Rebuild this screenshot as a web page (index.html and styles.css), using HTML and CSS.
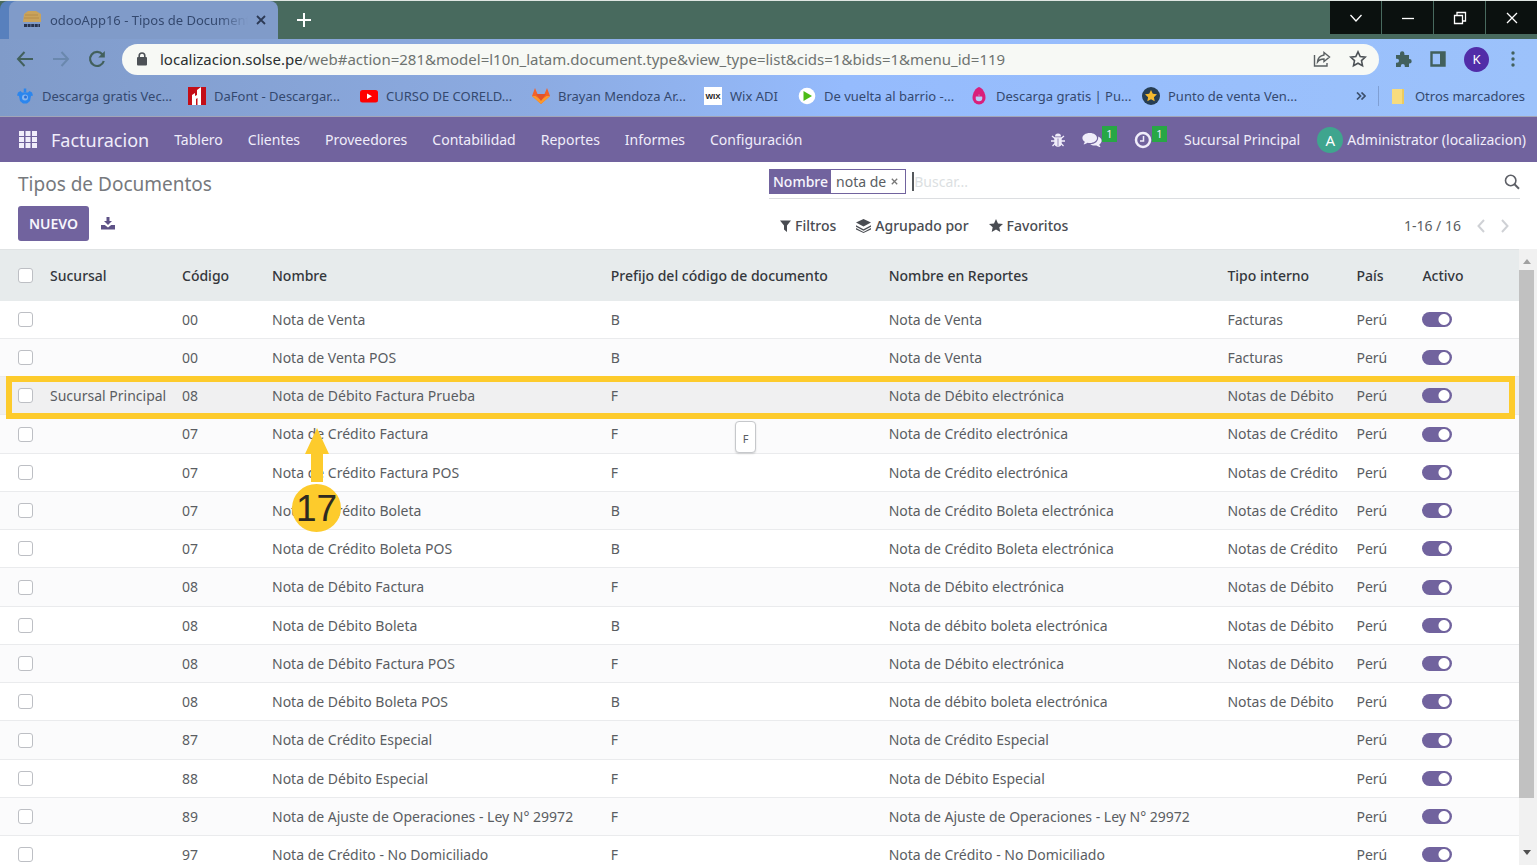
FILE: index.html
```
<!DOCTYPE html>
<html lang="es">
<head>
<meta charset="utf-8">
<title>odooApp16 - Tipos de Documentos</title>
<link rel="stylesheet" href="styles.css">
</head>
<body>
<header class="browser">
  <div class="tabstrip">
    <div class="tab">
      <svg class="favicon" viewBox="0 0 20 20"><path d="M2 4 6 1h8l5 3v8H1z" fill="#c9a35c"/><path d="M3 5h13M2 8h15" stroke="#b58c4a"/><path d="M2 15.500h16" stroke="#27334f" stroke-width="3" stroke-dasharray="3 .6"/></svg>
      <span class="tab-title">odooApp16 - Tipos de Documentos</span>
      <button class="bare" aria-label="Cerrar pestaña"><svg width="10" height="10" viewBox="0 0 10 10"><path d="m1 1 8 8M9 1 1 9" stroke="#2c3a55" stroke-width="1.800"/></svg></button>
    </div>
    <button class="bare new-tab" aria-label="Nueva pestaña"><svg width="14" height="14" viewBox="0 0 14 14"><path d="M7 0v14M0 7h14" stroke="#fff" stroke-width="2"/></svg></button>
    <div class="window-buttons">
      <button aria-label="Buscar pestañas"><svg width="14" height="14" viewBox="0 0 14 14"><path d="m1.500 4 5.500 6 5.500-6"/></svg></button>
      <button aria-label="Minimizar"><svg width="14" height="14" viewBox="0 0 14 14"><path d="M1 7.500h12"/></svg></button>
      <button aria-label="Restaurar"><svg width="14" height="14" viewBox="0 0 14 14"><path d="M1.500 4.500h8v8h-8zM4 4V1.500h8.500V10H10"/></svg></button>
      <button aria-label="Cerrar"><svg width="14" height="14" viewBox="0 0 14 14"><path d="m2 2 10 10M12 2 2 12"/></svg></button>
    </div>
  </div>
  <div class="toolbar">
    <button class="bare" aria-label="Atrás"><svg width="18" height="16" viewBox="0 0 18 16"><path d="M17 8H2M8.500 1 2 8l6.500 7" fill="none" stroke="#42605c" stroke-width="2"/></svg></button>
    <button class="bare" aria-label="Adelante"><svg width="18" height="16" viewBox="0 0 18 16"><path d="M1 8h15M9.500 1 16 8l-6.500 7" fill="none" stroke="#6a88ae" stroke-width="2"/></svg></button>
    <button class="bare" aria-label="Recargar"><svg width="18" height="18" viewBox="0 0 18 18"><path d="M14.500 4.500A7 7 0 1 0 15.800 11" fill="none" stroke="#42605c" stroke-width="2.200"/><path d="M16.800 1v6.500h-6.500z" fill="#42605c"/></svg></button>
    <div class="omnibox">
      <svg width="10" height="14" viewBox="0 0 10 14"><path d="M2.200 6V3.800a2.800 2.800 0 0 1 5.600 0V6" fill="none" stroke="#4d5256" stroke-width="1.600"/><rect y="5" width="10" height="8.500" rx="1" fill="#4d5256"/></svg>
      <div class="url"><span class="host">localizacion.solse.pe</span>/web#action=281&amp;model=l10n_latam.document.type&amp;view_type=list&amp;cids=1&amp;bids=1&amp;menu_id=119</div>
      <button class="bare" aria-label="Compartir"><svg width="18" height="18" viewBox="0 0 18 18" fill="none" stroke="#5a6062" stroke-width="1.400"><path d="M1.500 5v11h12.500v-3"/><path d="M11 2.500 16.500 7 11 11.500V9c-3 0-5 .8-6.500 3 .3-3.800 2.500-6.300 6.500-7z"/></svg></button>
      <button class="bare" aria-label="Añadir a marcadores"><svg width="18" height="18" viewBox="0 0 18 18"><path d="m9 1.800 2.200 4.700 5.100.6-3.800 3.500 1 5.100L9 13.200l-4.500 2.500 1-5.100L1.700 7.100l5.100-.6z" fill="none" stroke="#4d5256" stroke-width="1.600"/></svg></button>
    </div>
    <button class="bare" aria-label="Extensiones"><svg width="18" height="18" viewBox="0 0 18 18"><path d="M2 5h4V3.500a2.200 2.200 0 0 1 4.400 0V5H15v4h.5a2.200 2.200 0 0 1 0 4.400H15V17h-4.200v-1a2 2 0 0 0-4 0v1H2v-4.300h1a2 2 0 0 0 0-4H2z" fill="#42605c"/></svg></button>
    <button class="bare" aria-label="Panel lateral"><svg width="16" height="16" viewBox="0 0 16 16"><path d="M1.500 1.500h13v13h-13z" fill="none" stroke="#42605c" stroke-width="2.400"/><path d="M10 1h5v14h-5z" fill="#42605c"/></svg></button>
    <button class="profile">K</button>
    <button class="bare kebab" aria-label="Menú"><svg width="4" height="16" viewBox="0 0 4 16" fill="#42605c"><circle cx="2" cy="2" r="1.700"/><circle cx="2" cy="8" r="1.700"/><circle cx="2" cy="14" r="1.700"/></svg></button>
  </div>
  <nav class="bookmarks">
    <a href="#"><svg viewBox="0 0 18 18"><path d="M2 5.500 4.500 4l1.500 1.500h6L13.500 4 16 5.500l1 3-2 .5-1 5-3 2.500H7L4 14 3 9l-2-.5z" fill="#2b86ee"/><path d="M9 1.500v4" stroke="#2b86ee" stroke-width="2.500"/><circle cx="9" cy="10.500" r="3" fill="#86b4ee"/><circle cx="9.500" cy="10" r="1.500" fill="#2b6fd6"/></svg>Descarga gratis Vec...</a>
    <a href="#"><svg viewBox="0 0 18 18"><path d="M0 0h18v18H0z" fill="#c40d17"/><path d="M4 18V8l3-2v3l2-1V3l4-3v18H9.500v-7L8 12v6z" fill="#fff"/></svg>DaFont - Descargar...</a>
    <a href="#"><svg viewBox="0 0 18 18"><rect y="3" width="18" height="12.500" rx="2.500" fill="#f00"/><path d="M7 6.500v5.500l5-2.750z" fill="#fff"/></svg>CURSO DE CORELD...</a>
    <a href="#"><svg viewBox="0 0 18 18"><path d="M3 1 0 9l9 8 9-8-3-8-2.500 6h-7z" fill="#f2622a"/><path d="m0 9 9 8 9-8-3.500 0L9 13 3.500 9z" fill="#fb9a2c"/><path d="M4 7h10l-5 7z" fill="#e2532a"/></svg>Brayan Mendoza Ar...</a>
    <a href="#" class="short"><svg viewBox="0 0 18 18"><path d="M0 0h18v18H0z" fill="#fff"/><text x="9" y="12" text-anchor="middle" class="wix">WIX</text></svg>Wix ADI</a>
    <a href="#"><svg viewBox="0 0 18 18"><circle cx="9" cy="9" r="8.300" fill="#fff"/><path d="M5.500 4v10L14 9z" fill="#4cbb17"/></svg>De vuelta al barrio -...</a>
    <a href="#"><svg viewBox="0 0 18 18"><path d="M9 0c3 1 6.500 5 6.500 11a6.500 6.500 0 0 1-13 0C2.500 5 6 1 9 0z" fill="#d91f7b"/><circle cx="9" cy="11" r="3.300" fill="#b9cdf8"/><path d="m6 7 3 1.500L12 7v2.500H6z" fill="#d91f7b"/></svg>Descarga gratis | Pu...</a>
    <a href="#"><svg viewBox="0 0 18 18"><circle cx="9" cy="9" r="9" fill="#263d52"/><path d="m9 3 1.800 3.800 4.200.5-3.100 2.900.8 4.100L9 12.300l-3.700 2 .8-4.100L3 7.300l4.200-.5z" fill="#f4b92e"/></svg>Punto de venta Ven...</a>
    <button class="bare more" aria-label="Más marcadores"><svg width="10" height="8" viewBox="0 0 10 8"><path d="m1 .5 3.500 3.500L1 7.500M5.500.5 9 4 5.500 7.500" fill="none" stroke="#3b4f6c" stroke-width="1.700"/></svg></button>
    <a href="#" class="others"><svg viewBox="0 0 18 18"><path d="M3 2h12v15H3z" fill="#f7dc7e"/><path d="M13 2h2v15h-2z" fill="#eccb60"/></svg>Otros marcadores</a>
  </nav>
</header>

<nav class="navbar">
  <button class="bare" aria-label="Aplicaciones"><svg width="18" height="17" viewBox="0 0 18 17" fill="#f0edfa"><path d="M0 0h5v5H0zM6.500 0h5v5h-5zM13 0h5v5h-5zM0 6h5v5H0zM6.500 6h5v5h-5zM13 6h5v5h-5zM0 12h5v5H0zM6.500 12h5v5h-5zM13 12h5v5h-5z"/></svg></button>
  <a href="#" class="brand">Facturacion</a>
  <div class="menu">
    <a href="#">Tablero</a><a href="#">Clientes</a><a href="#">Proveedores</a><a href="#">Contabilidad</a><a href="#">Reportes</a><a href="#">Informes</a><a href="#">Configuración</a>
  </div>
  <div class="systray">
    <button class="bare" aria-label="Depuración"><svg width="14" height="14" viewBox="0 0 14 14"><path d="M4 3.500a3 3 0 0 1 6 0z" fill="#f0edfa"/><path d="M3.300 4.300h7.400V10a3.700 3.700 0 0 1-7.400 0z" fill="#f0edfa"/><path d="m1 3 3 2.500M13 3l-3 2.500M0 8h14M1.500 13 4 10.500M12.500 13 10 10.500" stroke="#f0edfa" stroke-width="1.300"/><path d="M7 5.500V13" stroke="#71639e" stroke-width=".7"/></svg></button>
    <button class="bare counter" aria-label="Conversaciones"><svg width="20" height="18" viewBox="0 -1 20 18" fill="#f0edfa"><path d="M7.800 1C12 1 15 3.200 15 6s-3 5-7.200 5c-.8 0-1.500 0-2.200-.2C4.500 11.600 3 12.300 1.500 12.300c.7-.7 1.200-1.500 1.300-2.500C1.200 8.900.4 7.500.4 6c0-2.800 3.200-5 7.400-5z"/><path d="M16.200 4.500c2 .9 3.400 2.300 3.400 4.200 0 1.500-.9 2.800-2.300 3.700.2 1 .6 1.800 1.300 2.500-1.600 0-3-.6-4.200-1.500-2.400.4-4.600 0-6.200-1.200 4.800 0 8.500-2.800 8-7.700z"/></svg><span class="badge">1</span></button>
    <button class="bare counter" aria-label="Actividades"><svg width="18" height="18" viewBox="0 0 18 18"><circle cx="9" cy="9" r="7" fill="none" stroke="#f0edfa" stroke-width="2.500"/><path d="M9.500 5v5H6" fill="none" stroke="#f0edfa" stroke-width="1.500"/></svg><span class="badge">1</span></button>
    <a href="#">Sucursal Principal</a>
    <a href="#" class="user"><span class="avatar">A</span>Administrator (localizacion)</a>
  </div>
</nav>

<section class="control-panel">
  <div class="cp-left">
    <h1>Tipos de Documentos</h1>
    <div class="actions">
      <button class="primary">NUEVO</button>
      <button class="bare" aria-label="Exportar"><svg width="14" height="13" viewBox="0 0 14 13" fill="#5e5287"><path d="M5.500 0h3v4H11L7 8 3 4h2.500z"/><path d="M0 8h3.800L7 10.500 10.200 8H14v4.500H0z"/></svg></button>
    </div>
  </div>
  <div class="cp-right">
    <div class="search">
      <div class="facet"><span class="facet-name">Nombre</span><span class="facet-value">nota de <button class="bare" aria-label="Quitar"><svg width="7" height="7" viewBox="0 0 7 7"><path d="m.8.800 5.400 5.400M6.200.8.800 6.200" stroke="#777" stroke-width="1.300"/></svg></button></span></div>
      <i class="caret"></i>
      <input type="text" placeholder="Buscar..." aria-label="Buscar">
      <button class="bare" aria-label="Buscar"><svg width="16" height="16" viewBox="0 0 16 16" fill="none" stroke="#5d5f66"><circle cx="6.700" cy="6.500" r="5.200" stroke-width="1.600"/><path d="m10.500 10.300 4.500 4.500" stroke-width="2"/></svg></button>
    </div>
    <div class="filters">
      <button><svg width="11" height="12" viewBox="0 0 11 12"><path d="M0 .5h11L7 5.500V12L4 9.500v-4z"/></svg>Filtros</button>
      <button><svg width="15" height="14" viewBox="0 0 15 14"><path d="m7.500 0 7.500 3.500L7.500 7.500 0 3.500z"/><path d="m0 6.300 7.500 4 7.500-4v1.500l-7.500 4-7.500-4z"/><path d="m0 9 7.500 4L15 9v1.400L7.500 14 0 10.400z"/></svg>Agrupado por</button>
      <button><svg width="14" height="13" viewBox="0 0 14 13"><path d="m7 0 2 4.400 5 .5-3.700 3.300 1 4.800L7 10.600 2.700 13l1-4.800L0 4.900l5-.5z"/></svg>Favoritos</button>
      <div class="pager"><span>1-16 / 16</span>
        <button class="bare" aria-label="Anterior"><svg width="8" height="14" viewBox="0 0 8 14"><path d="M7 1 1.500 7 7 13"/></svg></button>
        <button class="bare" aria-label="Siguiente"><svg width="8" height="14" viewBox="0 0 8 14"><path d="m1 1 5.500 6L1 13"/></svg></button></div>
    </div>
  </div>
</section>

<main class="list">
  <div class="table-wrap">
  <table>
    <colgroup><col class="c-check"><col class="c-branch"><col class="c-code"><col class="c-name"><col class="c-prefix"><col class="c-report"><col class="c-type"><col class="c-country"><col></colgroup>
    <thead><tr><th><input type="checkbox" aria-label="Seleccionar todo"></th><th>Sucursal</th><th>Código</th><th>Nombre</th><th>Prefijo del código de documento</th><th>Nombre en Reportes</th><th>Tipo interno</th><th>País</th><th>Activo</th></tr></thead>
    <tbody>
      <tr><td><input type="checkbox" aria-label="Fila"></td><td></td><td>00</td><td>Nota de Venta</td><td>B</td><td>Nota de Venta</td><td>Facturas</td><td>Perú</td><td><input type="checkbox" class="switch" aria-label="Activo" checked></td></tr>
      <tr><td><input type="checkbox" aria-label="Fila"></td><td></td><td>00</td><td>Nota de Venta POS</td><td>B</td><td>Nota de Venta</td><td>Facturas</td><td>Perú</td><td><input type="checkbox" class="switch" aria-label="Activo" checked></td></tr>
      <tr class="current"><td><input type="checkbox" aria-label="Fila"><span class="highlight"></span><span class="step"><svg width="24" height="54" viewBox="0 0 24 54" fill="#fdcb2c"><path d="M12 0 24 26h-6v28H6V26H0z"/></svg><b>17</b></span></td><td>Sucursal Principal</td><td>08</td><td>Nota de Débito Factura Prueba</td><td>F<span class="tooltip" role="tooltip">F</span></td><td>Nota de Débito electrónica</td><td>Notas de Débito</td><td>Perú</td><td><input type="checkbox" class="switch" aria-label="Activo" checked></td></tr>
      <tr><td><input type="checkbox" aria-label="Fila"></td><td></td><td>07</td><td>Nota de Crédito Factura</td><td>F</td><td>Nota de Crédito electrónica</td><td>Notas de Crédito</td><td>Perú</td><td><input type="checkbox" class="switch" aria-label="Activo" checked></td></tr>
      <tr><td><input type="checkbox" aria-label="Fila"></td><td></td><td>07</td><td>Nota de Crédito Factura POS</td><td>F</td><td>Nota de Crédito electrónica</td><td>Notas de Crédito</td><td>Perú</td><td><input type="checkbox" class="switch" aria-label="Activo" checked></td></tr>
      <tr><td><input type="checkbox" aria-label="Fila"></td><td></td><td>07</td><td>Nota de Crédito Boleta</td><td>B</td><td>Nota de Crédito Boleta electrónica</td><td>Notas de Crédito</td><td>Perú</td><td><input type="checkbox" class="switch" aria-label="Activo" checked></td></tr>
      <tr><td><input type="checkbox" aria-label="Fila"></td><td></td><td>07</td><td>Nota de Crédito Boleta POS</td><td>B</td><td>Nota de Crédito Boleta electrónica</td><td>Notas de Crédito</td><td>Perú</td><td><input type="checkbox" class="switch" aria-label="Activo" checked></td></tr>
      <tr><td><input type="checkbox" aria-label="Fila"></td><td></td><td>08</td><td>Nota de Débito Factura</td><td>F</td><td>Nota de Débito electrónica</td><td>Notas de Débito</td><td>Perú</td><td><input type="checkbox" class="switch" aria-label="Activo" checked></td></tr>
      <tr><td><input type="checkbox" aria-label="Fila"></td><td></td><td>08</td><td>Nota de Débito Boleta</td><td>B</td><td>Nota de débito boleta electrónica</td><td>Notas de Débito</td><td>Perú</td><td><input type="checkbox" class="switch" aria-label="Activo" checked></td></tr>
      <tr><td><input type="checkbox" aria-label="Fila"></td><td></td><td>08</td><td>Nota de Débito Factura POS</td><td>F</td><td>Nota de Débito electrónica</td><td>Notas de Débito</td><td>Perú</td><td><input type="checkbox" class="switch" aria-label="Activo" checked></td></tr>
      <tr><td><input type="checkbox" aria-label="Fila"></td><td></td><td>08</td><td>Nota de Débito Boleta POS</td><td>B</td><td>Nota de débito boleta electrónica</td><td>Notas de Débito</td><td>Perú</td><td><input type="checkbox" class="switch" aria-label="Activo" checked></td></tr>
      <tr><td><input type="checkbox" aria-label="Fila"></td><td></td><td>87</td><td>Nota de Crédito Especial</td><td>F</td><td>Nota de Crédito Especial</td><td></td><td>Perú</td><td><input type="checkbox" class="switch" aria-label="Activo" checked></td></tr>
      <tr><td><input type="checkbox" aria-label="Fila"></td><td></td><td>88</td><td>Nota de Débito Especial</td><td>F</td><td>Nota de Débito Especial</td><td></td><td>Perú</td><td><input type="checkbox" class="switch" aria-label="Activo" checked></td></tr>
      <tr><td><input type="checkbox" aria-label="Fila"></td><td></td><td>89</td><td>Nota de Ajuste de Operaciones - Ley N° 29972</td><td>F</td><td>Nota de Ajuste de Operaciones - Ley N° 29972</td><td></td><td>Perú</td><td><input type="checkbox" class="switch" aria-label="Activo" checked></td></tr>
      <tr><td><input type="checkbox" aria-label="Fila"></td><td></td><td>97</td><td>Nota de Crédito - No Domiciliado</td><td>F</td><td>Nota de Crédito - No Domiciliado</td><td></td><td>Perú</td><td><input type="checkbox" class="switch" aria-label="Activo" checked></td></tr>
    </tbody>
  </table>
  </div>
  <div class="scrollbar">
    <svg width="8" height="5" viewBox="0 0 8 5"><path d="M0 5h8L4 0z" fill="#a0a0a0"/></svg>
    <div class="track"><div class="thumb"></div></div>
    <svg width="8" height="5" viewBox="0 0 8 5"><path d="M0 0h8L4 5z" fill="#505050"/></svg>
  </div>
</main>
</body>
</html>
```
FILE: styles.css
```
* { box-sizing: border-box; }
html, body { height: 100%; }
body {
  margin: 0;
  display: flex;
  flex-direction: column;
  overflow: hidden;
  background: #fff;
  color: #5a5d62;
  font: 14px/20px "Noto Sans", "Open Sans", sans-serif;
}
a { color: inherit; text-decoration: none; white-space: nowrap; }
button { font: inherit; color: inherit; cursor: pointer; }
svg { display: block; flex: none; }
.bare { border: 0; padding: 0; background: none; flex: none; }

/* Browser window */
.browser { flex: none; background: linear-gradient(90deg, #809bc9, #8cabe2 35%, #95bbfd 55%, #9cc2fb); border-bottom: 1px solid #a2a5b8; }
.tabstrip { display: flex; height: 39px; align-items: center; background: #486a5e; border-top: 1px solid #dfe6e2; }
.tab {
  display: flex; align-items: center; gap: 8px;
  align-self: stretch;
  width: 269px; margin-left: 9px; padding: 0 12px 0 13px;
  border-radius: 8px 8px 0 0;
  background: #809bc9;
  box-shadow: -9px 0 #5880bd;
}
.favicon { width: 20px; height: 20px; }
.tab-title {
  flex: 1; overflow: hidden; white-space: nowrap; color: #34496f; font-size: 13px;
  mask-image: linear-gradient(90deg, #000 85%, transparent);
}
.new-tab { margin-left: 19px; }
.window-buttons { display: flex; align-self: flex-start; gap: 1px; margin-left: auto; background: #486a5e; }
.window-buttons button { display: grid; place-items: center; width: 51px; height: 33px; padding: 0; border: 0; background: #0b110f; }
.window-buttons path { fill: none; stroke: #fff; stroke-width: 1.3; }
.toolbar { display: flex; align-items: center; gap: 18px; height: 40px; padding: 0 22px 0 16px; }
.omnibox {
  flex: 1; display: flex; align-items: center; gap: 18px; min-width: 0;
  height: 31px; margin: 0 -3px 0 -2px; padding: 0 12px 0 15px;
  border-radius: 16px; background: #f7f9f5;
}
.url { flex: 1; overflow: hidden; white-space: nowrap; color: #6e7370; font-size: 15px; margin-left: -5px; }
.host { color: #2a2f30; }
.profile { width: 25px; height: 25px; padding: 0; border: 0; border-radius: 50%; background: #512da8; color: #fff; font-size: 13px; line-height: 25px; }
.kebab { padding-left: 4px; }
.bookmarks { display: flex; align-items: center; height: 37px; padding: 0 12px 4px 16px; color: #34496f; font-size: 13px; }
.bookmarks a { display: flex; align-items: center; gap: 8px; width: 172px; }
.bookmarks a svg { width: 18px; height: 18px; }
.bookmarks .short { width: 94px; }
.wix { font: 700 8px "Liberation Sans", sans-serif; fill: #222; }
.more { margin-left: auto; padding-right: 12px; }
.bookmarks .others { width: auto; padding-left: 10px; border-left: 1px solid #7f9fd4; }

/* Application bar */
.navbar { flex: none; display: flex; align-items: center; height: 45px; padding: 0 11px 0 19px; background: #71639e; color: #f0edfa; }
.brand { margin: 0 25px 0 14px; font-size: 18px; }
.menu { display: flex; gap: 25px; }
.systray { display: flex; align-items: center; margin-left: auto; gap: 17px; }
.counter { display: flex; align-items: center; }
.badge { align-self: flex-start; width: 15px; height: 16px; margin: -5px 0 5px; background: #28a745; font-size: 11px; line-height: 16px; }
.user { display: flex; align-items: center; gap: 4px; }
.avatar { width: 26px; height: 26px; border-radius: 50%; background: #3fa58e; color: #fff; text-align: center; line-height: 26px; font-size: 15px; }

/* Control panel */
.control-panel { flex: none; display: grid; grid-template-columns: 1fr 1fr; height: 87px; padding: 0 17px 0 18px; }
h1 { margin: 8px 0; font-size: 19px; line-height: 28px; font-weight: 400; color: #76797d; }
.actions { display: flex; align-items: center; gap: 12px; }
.primary { height: 35px; padding: 0 11px; border: 0; border-radius: 3px; background: #71639e; color: #f7f5fd; font-weight: 600; }
.search { display: flex; align-items: center; height: 37px; padding-top: 3px; border-bottom: 1px solid #dcdee1; }
.facet { display: flex; height: 25px; border: 1px solid #71639e; line-height: 23px; }
.facet-name { padding: 0 3px; background: #71639e; color: #f7f5fd; font-weight: 500; }
.facet-value { display: flex; align-items: center; gap: 5px; padding: 0 7px 0 5px; }
.caret { width: 2px; height: 19px; margin-left: 6px; background: #55585c; }
.search input { flex: 1; min-width: 0; padding: 0; border: 0; outline: 0; font: inherit; }
.search input::placeholder { color: #dcdfe2; }
.filters { display: flex; align-items: center; gap: 20px; height: 53px; padding-left: 11px; }
.filters > button { display: flex; align-items: center; gap: 4px; padding: 0; border: 0; background: none; font-weight: 500; color: #494c52; }
.filters > button svg { fill: #494c52; }
.pager { display: flex; align-items: center; gap: 16px; margin-left: auto; padding-right: 11px; }
.pager path { fill: none; stroke: #cfd1d5; stroke-width: 2; }

/* List */
.list { flex: 1; display: flex; min-height: 0; }
.table-wrap { flex: 1; min-width: 0; overflow: hidden; }
table { width: 100%; table-layout: fixed; border-collapse: separate; border-spacing: 0; }
.c-check { width: 45px; }
.c-branch { width: 132px; }
.c-code { width: 90px; }
.c-name, .c-report { width: 22.3%; }
.c-prefix { width: 18.3%; }
.c-type { width: 129px; }
.c-country { width: 66px; }
th, td { height: 38px; padding: 0 5px; text-align: left; white-space: nowrap; vertical-align: middle; }
th { height: 52px; background: #e7ebec; border-top: 1px solid #e0e3e4; color: #34373c; font-weight: 500; }
td { border-bottom: 1px solid #eaebed; }
tr > :first-child { padding-left: 18px; }
tbody tr:nth-child(even) { background: #fbfbfc; }
tbody tr:nth-child(4n) td { height: 39px; }
.current { position: relative; background: #f0f0f1; }
input[type="checkbox"] { appearance: none; display: block; width: 15px; height: 15px; margin: 0; border: 1px solid #bdbfc4; border-radius: 3px; background: #fff; }
input[type="checkbox"].switch { width: 30px; height: 15px; border: 0; border-radius: 8px; background: radial-gradient(circle at 22px 50%, #fff 5px, transparent 6px) #71639e; }
.highlight { position: absolute; z-index: 1; inset: -1px 4px -4px 6px; border: 6px solid #fdcb2c; pointer-events: none; }
.step { position: absolute; z-index: 2; top: 51px; left: 292px; display: flex; flex-direction: column; align-items: center; gap: 2px; }
.step b { width: 49px; height: 48px; border-radius: 50%; background: #fdcb2c; color: #2e2a20; font: 37px/50px "Liberation Sans", Arial, sans-serif; text-align: center; }
.tooltip { position: absolute; z-index: 2; top: 44px; left: 735px; width: 21px; height: 32px; border: 1px solid #c6c8cb; border-radius: 4px; background: #fff; font-size: 11px; line-height: 34px; text-align: center; box-shadow: 0 1px 2px #0002; }
.scrollbar { display: flex; flex-direction: column; align-items: center; width: 18px; padding: 10px 3px 10px 0; background: #f1f1f1; gap: 6px; }
.track { flex: 1; align-self: stretch; }
.thumb { height: 92%; background: #c1c1c1; }
```
